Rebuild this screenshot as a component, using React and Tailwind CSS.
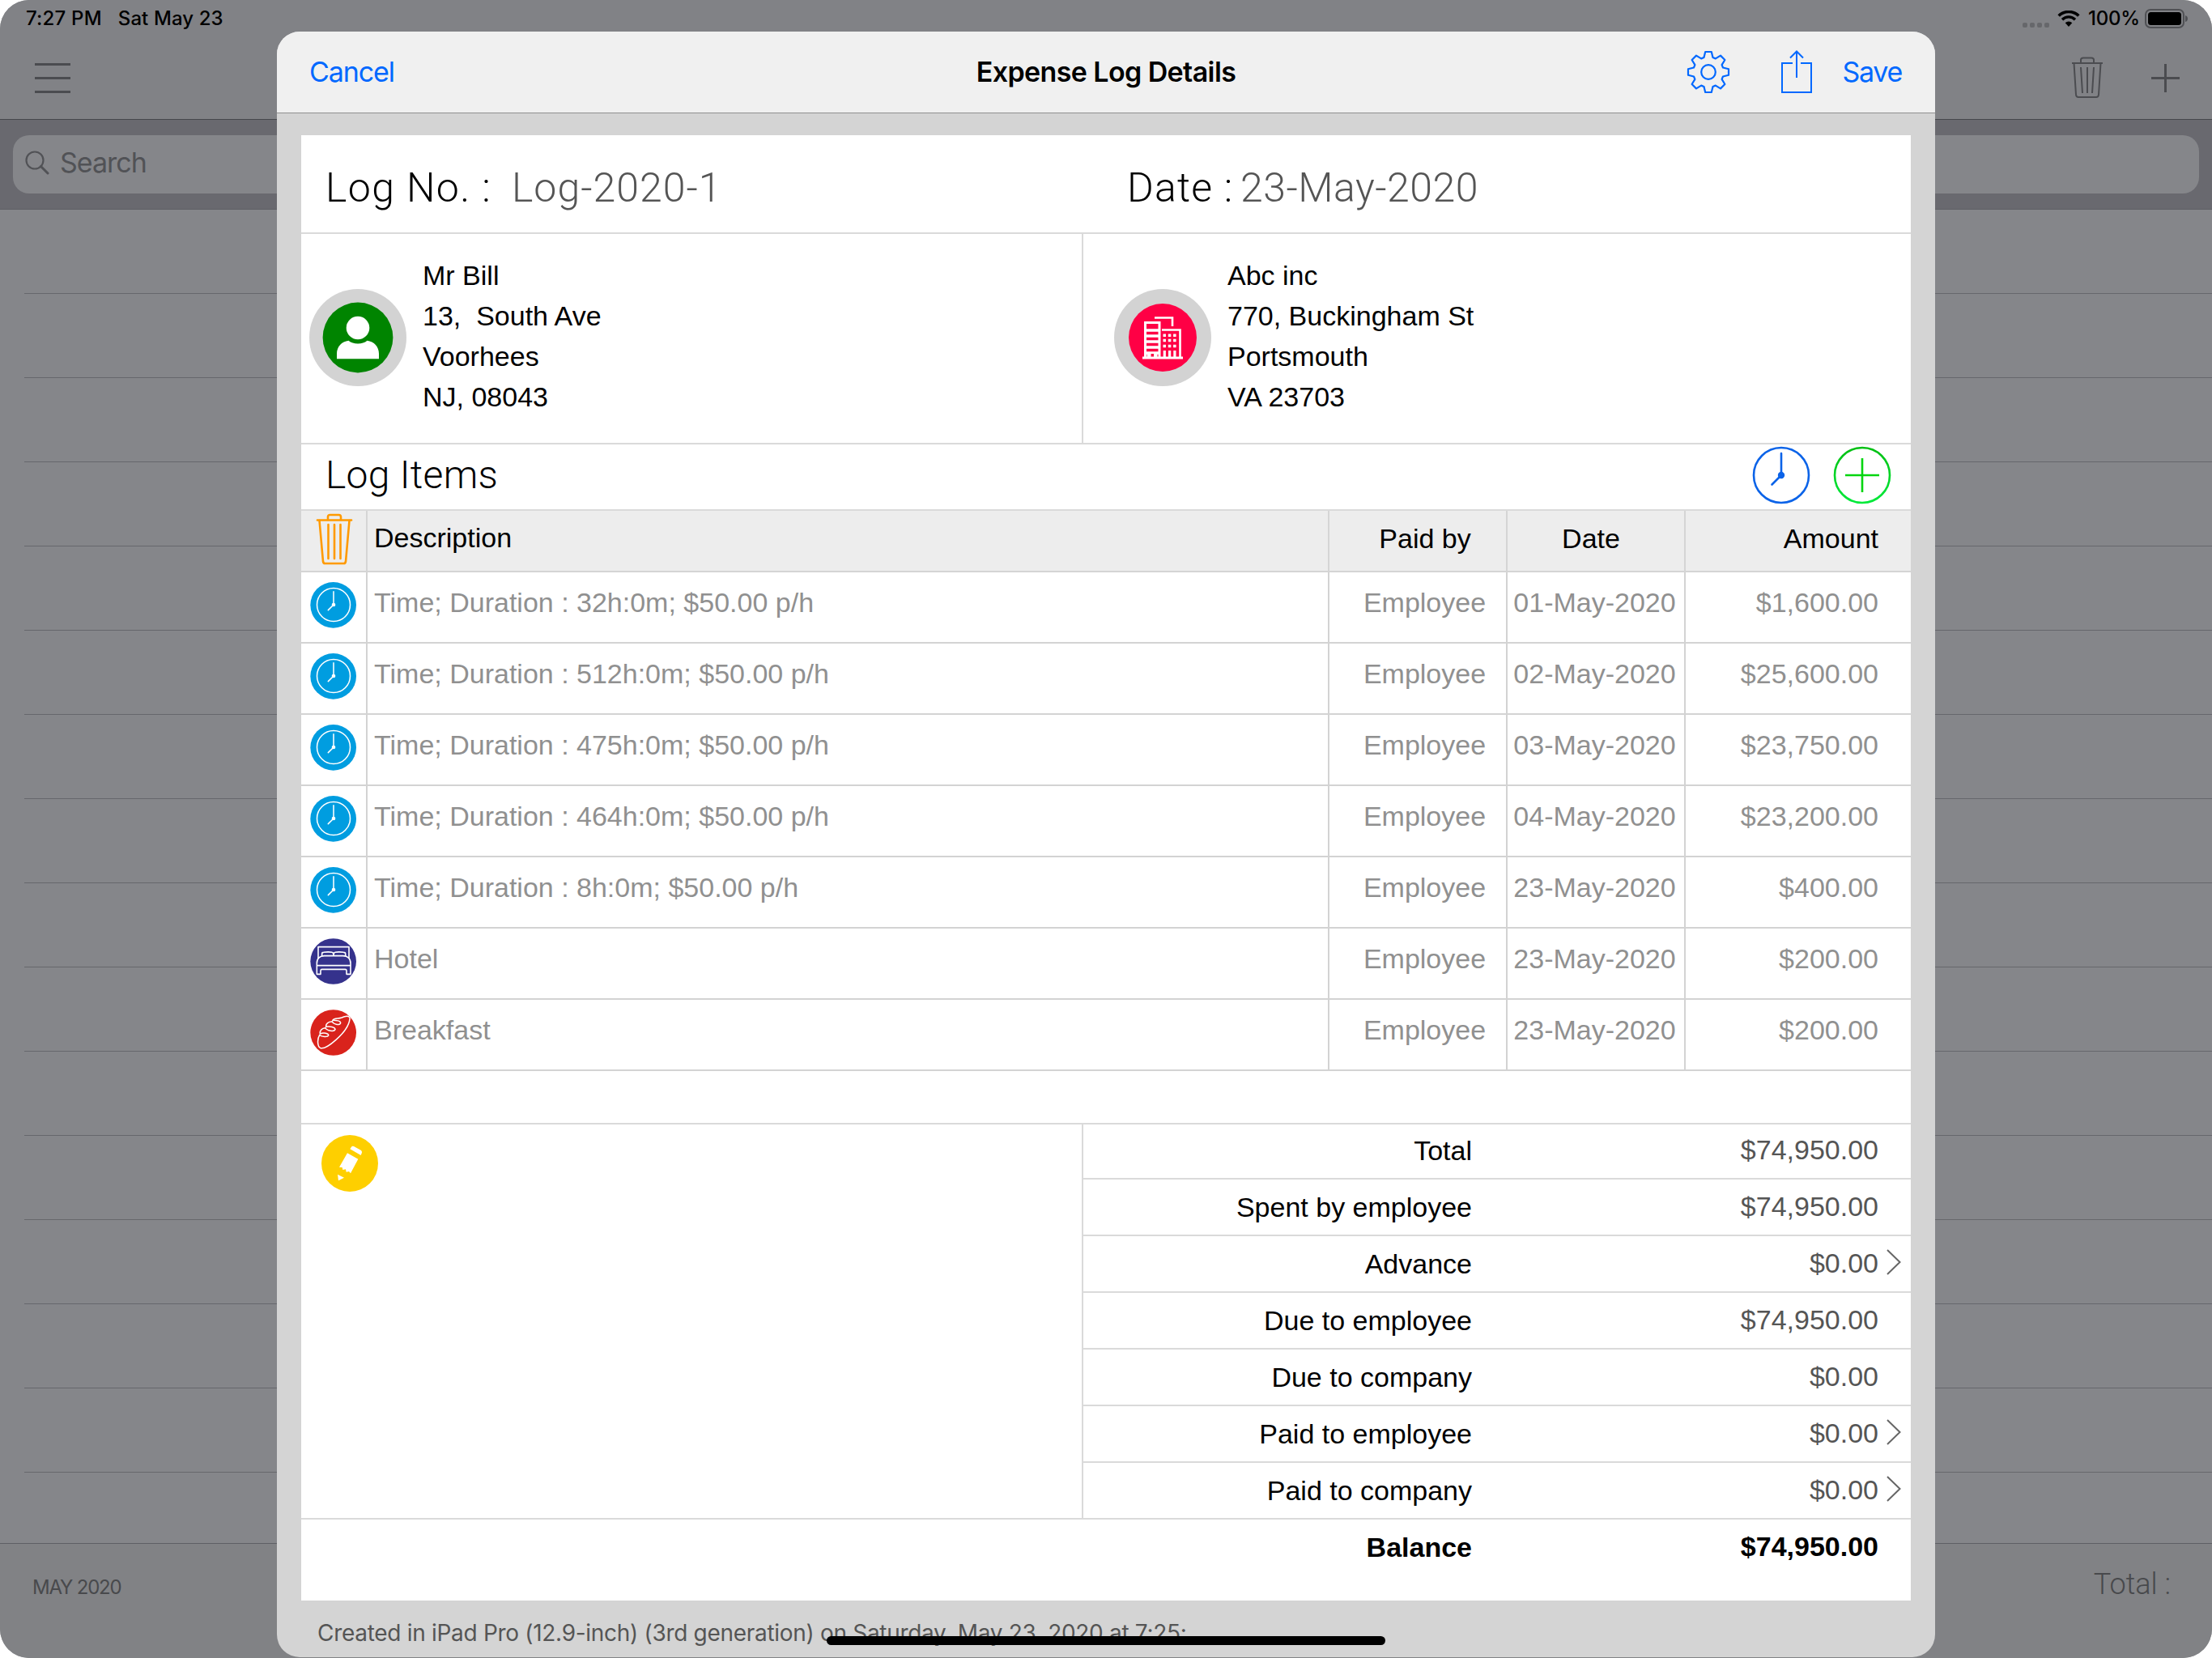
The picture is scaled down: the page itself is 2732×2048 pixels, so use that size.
import React from "react";

const logItems = [
  { type: "time", description: "Time; Duration : 32h:0m; $50.00 p/h", paidBy: "Employee", date: "01-May-2020", amount: "$1,600.00" },
  { type: "time", description: "Time; Duration : 512h:0m; $50.00 p/h", paidBy: "Employee", date: "02-May-2020", amount: "$25,600.00" },
  { type: "time", description: "Time; Duration : 475h:0m; $50.00 p/h", paidBy: "Employee", date: "03-May-2020", amount: "$23,750.00" },
  { type: "time", description: "Time; Duration : 464h:0m; $50.00 p/h", paidBy: "Employee", date: "04-May-2020", amount: "$23,200.00" },
  { type: "time", description: "Time; Duration : 8h:0m; $50.00 p/h", paidBy: "Employee", date: "23-May-2020", amount: "$400.00" },
  { type: "hotel", description: "Hotel", paidBy: "Employee", date: "23-May-2020", amount: "$200.00" },
  { type: "breakfast", description: "Breakfast", paidBy: "Employee", date: "23-May-2020", amount: "$200.00" },
];

const summary = [
  { label: "Total", value: "$74,950.00" },
  { label: "Spent by employee", value: "$74,950.00" },
  { label: "Advance", value: "$0.00", editable: true },
  { label: "Due to employee", value: "$74,950.00" },
  { label: "Due to company", value: "$0.00" },
  { label: "Paid to employee", value: "$0.00", editable: true },
  { label: "Paid to company", value: "$0.00", editable: true },
];

// Outline of the eight-tooth gear, centred on 0,0
const gearPoints = Array.from({ length: 8 }, (_, k) => {
  const a = (k * Math.PI) / 4;
  return [
    [-5.5, -18],
    [-3.8, -25],
    [3.8, -25],
    [5.5, -18],
  ]
    .map(([x, y]) => `${(x * Math.cos(a) - y * Math.sin(a)).toFixed(2)},${(x * Math.sin(a) + y * Math.cos(a)).toFixed(2)}`)
    .join(" ");
}).join(" ");

const GearIcon = () => (
  <svg className="w-[54px] h-[54px]" viewBox="-27 -27 54 54" fill="none" stroke="currentColor" strokeWidth="2.2" strokeLinejoin="round">
    <polygon points={gearPoints} />
    <circle r="8.8" />
  </svg>
);

const ShareIcon = () => (
  <svg className="w-10 h-[54px]" viewBox="0 0 40 54" fill="none" stroke="currentColor" strokeWidth="2">
    <path d="M15 16H2V52H38V16H25" />
    <path d="M20 34V2M12 9.5L20 1.5L28 9.5" />
  </svg>
);

const TrashIcon = () => (
  <svg className="w-10 h-[52px]" viewBox="0 0 40 52" fill="none" stroke="currentColor" strokeWidth="2">
    <path d="M1 8H39" />
    <path d="M12 7V4Q12 1.5 15 1.5H25Q28 1.5 28 4V7" />
    <path d="M3.5 8L6 47Q6.3 50 9 50H31Q33.7 50 34 47L36.5 8" />
    <path d="M12 13L14 45M20 13V45M28 13L26 45" />
  </svg>
);

const TrashHeaderIcon = () => (
  <svg className="w-[46px] h-16" viewBox="0 0 46 64" fill="none" stroke="#ff9a00" strokeWidth="2.6" strokeLinecap="round">
    <path d="M2 8.5H44" />
    <path d="M15 8V4.5Q15 2 17.5 2H28.5Q31 2 31 4.5V8" />
    <path d="M4.5 9L9 59.5Q9.3 62 11.5 62H34.5Q36.7 62 37 59.5L41.5 9" />
    <path d="M15.5 14V56M23 14V56M30.5 14V56" />
  </svg>
);

const WifiIcon = () => (
  <svg className="w-7 h-5" viewBox="0 0 28 20">
    <path d="M1.7 6.6A17.4 17.4 0 0 1 26.3 6.6" fill="none" stroke="#000" strokeWidth="3.6" />
    <path d="M6 11.2A11.2 11.2 0 0 1 22 11.2" fill="none" stroke="#000" strokeWidth="3.4" />
    <path d="M14 20L9.7 15.3A6.2 6.2 0 0 1 18.3 15.3Z" />
  </svg>
);

const BatteryIcon = () => (
  <svg className="w-[54px] h-6" viewBox="0 0 54 24">
    <rect x="1" y="1" width="47" height="22" rx="6" fill="none" stroke="#4f5054" strokeWidth="2" />
    <rect x="4" y="4" width="41" height="16" rx="3.5" />
    <path d="M50 8Q53 9 53 12T50 16Z" fill="#4f5054" />
  </svg>
);

const SearchIcon = () => (
  <svg className="w-[30px] h-[30px]" viewBox="0 0 30 30" fill="none" stroke="currentColor" strokeWidth="2.2">
    <circle cx="12" cy="12" r="10.5" />
    <path d="M19.5 19.5L28 28" strokeWidth="3" strokeLinecap="round" />
  </svg>
);

const PersonIcon = () => (
  <svg className="mb-0.5 w-[120px] h-[120px]" viewBox="0 0 120 120">
    <circle cx="60" cy="60" r="60" fill="#d3d3d3" />
    <circle cx="60" cy="60" r="43.4" fill="#008400" />
    <circle cx="60" cy="48" r="14.3" fill="#fff" />
    <path d="M34 86.3V80C34 71 40 65 48.5 63.7Q53 67.5 60 67.5T71.5 63.7C80 65 86 71 86 80V86.3Z" fill="#fff" />
  </svg>
);

const CompanyIcon = () => (
  <svg className="mb-0.5 w-[120px] h-[120px]" viewBox="0 0 120 120" fill="none" stroke="#fff" strokeWidth="2.6">
    <circle cx="60" cy="60" r="60" fill="#d3d3d3" stroke="none" />
    <circle cx="60" cy="60" r="42" fill="#ff0045" stroke="none" />
    <path d="M50 35.5H72V46" />
    <path d="M38.5 84V41.5H56V84" strokeWidth="3" />
    <path d="M40 51H55M40 58H55M40 65H55M40 72H55M40 79H55" strokeWidth="3.6" />
    <path d="M43 84V81H51V84" strokeWidth="5" />
    <path d="M47.3 80V84" stroke="#ff0045" strokeWidth="3.5" />
    <path d="M59 50.5H81.5V84" />
    <path d="M60.5 57.2H77M60.5 63.5H77M60.5 70.5H77" strokeWidth="3.5" strokeDasharray="3.5 2.8" />
    <path d="M62.3 76V84M68.6 76V84M74.9 76V84" strokeWidth="3.2" />
    <path d="M35 85H85" strokeWidth="3" />
  </svg>
);

const ClockIcon = () => (
  <svg className="w-[72px] h-[72px]" viewBox="0 0 72 72" fill="none" stroke="#0b63e8" strokeWidth="2.6" strokeLinecap="round">
    <circle cx="36" cy="36" r="34" />
    <path d="M36 36V9M36 36L24.5 47.5" />
    <circle cx="36" cy="36" r="4.2" fill="#0b63e8" stroke="none" />
  </svg>
);

const AddIcon = () => (
  <svg className="w-[72px] h-[72px]" viewBox="0 0 72 72" fill="none" strokeWidth="2.6">
    <defs>
      <linearGradient id="addRing" x1="0" y1="0" x2="0" y2="1">
        <stop offset="0" stopColor="#00bf12" />
        <stop offset="1" stopColor="#00ea3a" />
      </linearGradient>
    </defs>
    <circle cx="36" cy="36" r="34" stroke="url(#addRing)" />
    <path d="M15 36H57M36 15V57" stroke="#00d50f" />
  </svg>
);

const NoteIcon = () => (
  <svg className="w-[70px] h-[70px]" viewBox="111 966 210 210" fill="#fff">
    <circle cx="216" cy="1071" r="105" fill="#fecf00" />
    <path d="M217 1018L222 1010Q225 1005 231 1008L257 1022Q262 1025 261 1031L257 1041Z" />
    <path d="M207 1033L247 1055L219 1108L213 1101L203 1103L201 1093L190 1095L188 1086L177 1085Z" />
    <path d="M171 1112L195 1124L174 1135Z" />
  </svg>
);

const ItemIcon = ({ type }) => {
  if (type === "hotel")
    return (
      <svg className="w-[57px] h-[57px]" viewBox="69 237 171 171" fill="none" stroke="#fff" strokeWidth="4.8" strokeLinejoin="round">
        <circle cx="155" cy="322.5" r="85" fill="#35328c" stroke="none" />
        <path d="M99 312V269H213V312" />
        <path d="M113 304V294Q113 289 119 289Q137 286 150 289Q156 290 156 300Q156 290 162 289Q175 286 193 289Q200 289 200 294V304" />
        <path d="M94 370V330C94 311 106 302 122 302H190C206 302 219 311 219 330V370H204V357Q204 352 199 352H113Q108 352 108 357V370Z" />
        <path d="M94 338H219" />
      </svg>
    );
  if (type === "breakfast")
    return (
      <svg className="w-[57px] h-[57px]" viewBox="69 501 171 171" fill="none" stroke="#fff" strokeWidth="4.6" strokeLinejoin="round" strokeLinecap="round">
        <circle cx="155" cy="586.5" r="85" fill="#d9231c" stroke="none" />
        <path d="M153 541C160 530 172 537 186 531C198 525 217 521 216 536C213 562 190 591 165 613C146 630 121 647 108 644C95 638 95 610 104 596" />
        <path d="M104 596C113 602 134 604 137 597C138 588 118 586 106 591C104 580 113 569 125 569" />
        <path d="M125 569C133 581 158 584 162 575C162 566 141 562 128 565C126 553 138 545 151 546" />
        <path d="M151 546C157 557 181 561 182 550C181 543 164 541 153 541" />
      </svg>
    );
  return (
    <svg className="w-[57px] h-[57px]" viewBox="69 297 171 171" fill="none" stroke="#fff" strokeWidth="4.6" strokeLinecap="round">
      <circle cx="155" cy="382" r="85" fill="#009de0" stroke="none" />
      <circle cx="156" cy="381" r="61.5" />
      <path d="M156 381V332M156 381L136 401" />
      <circle cx="156" cy="381" r="7" fill="#fff" stroke="none" />
    </svg>
  );
};

const Chevron = () => (
  <svg className="w-5 h-8" viewBox="0 0 20 32" fill="none" stroke="#666" strokeWidth="2">
    <path d="M2 1L17.5 16L2 31" />
  </svg>
);

const BackgroundScreen = () => (
  <div className="flex h-full flex-col bg-[#85868a] text-[#4b4c50]">
    {/* Status bar */}
    <div className="flex h-[45px] items-center justify-between bg-[#818286] pl-8 pr-[29px] text-2xl font-medium text-black">
      <div className="flex gap-5">
        <span className="tracking-[0.2px]">7:27 PM</span>
        <span className="tracking-[0.1px]">Sat May 23</span>
      </div>
      <div className="flex items-center">
        <div className="mr-2.5 flex gap-[3px] pt-4">
          {[0, 1, 2, 3].map((n) => (
            <span key={n} className="h-1.5 w-1.5 rounded-[2px] bg-[#66676b]" />
          ))}
        </div>
        <WifiIcon />
        <span className="ml-2.5 mr-1.5 tracking-[-0.2px]">100%</span>
        <BatteryIcon />
      </div>
    </div>
    {/* Navigation bar */}
    <div className="flex h-[103px] items-center justify-between border-b border-[#46474c] bg-[#818286] pl-[43px] pr-10">
      <div className="flex flex-col gap-3.5">
        <span className="h-[3px] w-11 bg-current" />
        <span className="h-[3px] w-11 bg-current" />
        <span className="h-[3px] w-11 bg-current" />
      </div>
      <div className="flex items-center gap-[59px]">
        <TrashIcon />
        <svg className="w-[35px] h-[35px]" viewBox="0 0 35 35" stroke="currentColor" strokeWidth="3">
          <path d="M0 17.5H35M17.5 0V35" />
        </svg>
      </div>
    </div>
    {/* Search */}
    <div className="h-[111px] border-b border-[#5f6065] bg-[#69696f] px-4 pt-[19px]">
      <div className="flex h-[72px] items-center gap-[13px] rounded-[20px] bg-[#85868a] pb-[5px] pl-[15px] text-[34px] tracking-[-1px] text-[#515256]">
        <SearchIcon />
        <span>Search</span>
      </div>
    </div>
    {/* Empty list */}
    <div className="flex-1 pl-[30px]">
      {Array.from({ length: 15 }, (_, i) => (
        <div key={i} className="h-[104px] border-b border-[#66676c]" />
      ))}
    </div>
    <div className="flex h-[142px] items-center justify-between border-t border-[#5e5f64] bg-[#818285] pb-[34px] pl-10 pr-[51px] text-[#48494c]">
      <span className="text-2xl tracking-[-1.2px]">MAY 2020</span>
      <span className="pb-[7px] font-[Roboto] text-[36px] font-light">Total :</span>
    </div>
  </div>
);

const Party = ({ icon, lines }) => (
  <>
    {icon}
    <div className="ml-5 h-[206px] text-[34px] leading-[50px]">
      {lines.map((line) => (
        <div key={line} className="whitespace-pre">
          {line}
        </div>
      ))}
    </div>
  </>
);

const ItemsTable = () => (
  <div>
    <div className="flex h-[76px] border-b-2 border-[#d5d5d5] bg-[#ededed] text-[34px]">
      <div className="flex w-[82px] border-r-2 border-[#d5d5d5] pl-[18px] pt-[3px]">
        <TrashHeaderIcon />
      </div>
      <div className="flex flex-1 items-center border-r-2 border-[#d5d5d5] pb-[7px] pl-2">Description</div>
      <div className="flex w-[220px] items-center justify-center border-r-2 border-[#d5d5d5] pb-1.5 pl-[18px]">Paid by</div>
      <div className="flex w-[220px] items-center justify-center border-r-2 border-[#d5d5d5] pb-1.5 pr-3">Date</div>
      <div className="flex w-[278px] items-center justify-end pb-1.5 pr-10">Amount</div>
    </div>
    {logItems.map((item, i) => (
      <div key={i} className="flex h-[88px] border-b-2 border-[#d3d3d3] text-[34px] text-[#909090]">
        <div className="flex w-[82px] border-r-2 border-[#d3d3d3] pl-[11px] pt-3">
          <ItemIcon type={item.type} />
        </div>
        <div className="flex flex-1 items-center border-r-2 border-[#d3d3d3] pb-3 pl-2">{item.description}</div>
        <div className="flex w-[220px] items-center justify-center border-r-2 border-[#d3d3d3] pb-3 pl-[17px]">{item.paidBy}</div>
        <div className="flex w-[220px] items-center justify-center border-r-2 border-[#d3d3d3] pb-3 pr-[3px]">{item.date}</div>
        <div className="flex w-[278px] items-center justify-end pb-3 pr-10">{item.amount}</div>
      </div>
    ))}
  </div>
);

const Summary = () => (
  <div className="flex-1 text-[34px]">
    {summary.map((row) => (
      <div key={row.label} className="flex h-[70px] items-center border-b-2 border-[#dadada] first:h-[68px] first:pb-0.5 last:border-b-0 last:pb-0.5">
        <span className="w-[480px] text-right">{row.label}</span>
        <span className="w-[502px] pb-0.5 text-right text-[#555]">{row.value}</span>
        {row.editable && (
          <span className="pb-1 pl-[9px]">
            <Chevron />
          </span>
        )}
      </div>
    ))}
  </div>
);

const ExpenseLogDetails = () => (
  <div className="absolute left-[342px] top-[39px] flex h-[2008px] w-[2048px] flex-col overflow-hidden rounded-[28px] bg-[#d4d4d4]">
    <div className="flex h-[101px] shrink-0 items-center border-b border-[#8f8f8f] bg-[#f0f0f0] px-10 pb-px text-[34px] text-[#0068ff]">
      <span className="flex-1 tracking-[-1.1px]">Cancel</span>
      <span className="font-semibold tracking-[-0.6px] text-black">Expense Log Details</span>
      <div className="flex flex-1 items-center justify-end">
        <GearIcon />
        <div className="ml-[62px] mr-[37px]">
          <ShareIcon />
        </div>
        <span className="mr-px tracking-[-1.3px]">Save</span>
      </div>
    </div>

    <div className="mx-[30px] mt-[27px] flex h-[1810px] shrink-0 flex-col bg-white font-['Liberation_Sans',Arial,sans-serif] text-black">
      <div className="flex h-[120px] items-center pl-[30px] pt-2.5 font-[Roboto] text-[50px] font-light">
        <span className="w-[230px] tracking-[1.4px]">Log No. :</span>
        <span className="w-[760px] tracking-[1px] text-[#555]">Log-2020-1</span>
        <span className="w-[140px] tracking-[1.2px]">Date :</span>
        <span className="tracking-[0.5px] text-[#555]">23-May-2020</span>
      </div>

      <div className="flex h-[262px] border-y-2 border-[#dadada]">
        <div className="flex w-[966px] items-center border-r-2 border-[#dadada] pl-2.5">
          <Party icon={<PersonIcon />} lines={["Mr Bill", "13,  South Ave", "Voorhees", "NJ, 08043"]} />
        </div>
        <div className="flex flex-1 items-center pl-[38px]">
          <Party icon={<CompanyIcon />} lines={["Abc inc", "770, Buckingham St", "Portsmouth", "VA 23703"]} />
        </div>
      </div>

      <div className="flex h-[82px] items-center justify-between border-b-2 border-[#dadada] pb-1 pl-[30px] pr-6">
        <span className="font-[Roboto] text-[48px] font-light tracking-[0.3px]">Log Items</span>
        <div className="flex gap-7">
          <ClockIcon />
          <AddIcon />
        </div>
      </div>

      <ItemsTable />

      <div className="mt-16 flex h-[490px] border-y-2 border-[#dadada]">
        <div className="w-[966px] border-r-2 border-[#dadada] pl-[25px] pt-[13px]">
          <NoteIcon />
        </div>
        <Summary />
      </div>
      <div className="flex h-[68px] items-center pl-[966px] text-[34px] font-bold">
        <span className="w-[480px] text-right">Balance</span>
        <span className="w-[502px] pb-0.5 text-right">$74,950.00</span>
      </div>
    </div>

    <div className="whitespace-nowrap pl-[50px] pt-5 text-[28px] leading-[40px] tracking-[-0.3px] text-[#555]">
      Created in iPad Pro (12.9-inch) (3rd generation) on Saturday, May 23, 2020 at 7:25:
    </div>
  </div>
);

export default function App() {
  return (
    <div className="h-[2048px] w-[2732px] bg-white font-[Inter,sans-serif]">
      <div className="relative h-full overflow-hidden rounded-[36px]">
        <BackgroundScreen />
        <ExpenseLogDetails />
        {/* Home indicator */}
        <div className="absolute bottom-4 left-[1021px] h-[11px] w-[690px] rounded-full bg-black" />
      </div>
    </div>
  );
}
